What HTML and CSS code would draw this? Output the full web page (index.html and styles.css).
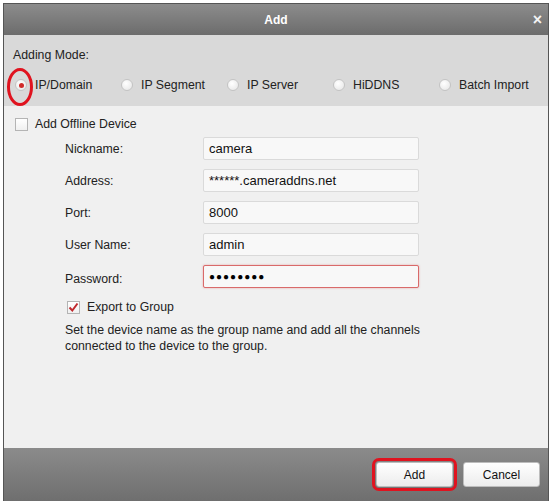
FILE: index.html
```html
<!DOCTYPE html>
<html lang="en">
<head>
    <meta charset="UTF-8">
    <title>Add</title>
    <link rel="stylesheet" href="styles.css">
</head>
<body>
    <div class="dialog">
        <div class="titlebar">
            <span class="title">Add</span>
            <span class="close">&times;</span>
        </div>

        <!-- Modo de agregado -->
        <div class="mode">
            <div class="mode-label">Adding Mode:</div>
            <div class="mode-options">
                <label class="option selected"><span class="radio"></span>IP/Domain<span class="mark-ellipse"></span></label>
                <label class="option"><span class="radio"></span>IP Segment</label>
                <label class="option"><span class="radio"></span>IP Server</label>
                <label class="option"><span class="radio"></span>HiDDNS</label>
                <label class="option"><span class="radio"></span>Batch Import</label>
            </div>
        </div>

        <div class="content">
            <label class="check-row offline"><span class="checkbox"></span>Add Offline Device</label>

            <div class="form">
                <div class="row"><span class="field-label">Nickname:</span><div class="input">camera</div></div>
                <div class="row"><span class="field-label">Address:</span><div class="input">******.cameraddns.net</div></div>
                <div class="row"><span class="field-label">Port:</span><div class="input">8000</div></div>
                <div class="row"><span class="field-label">User Name:</span><div class="input">admin</div></div>
                <div class="row"><span class="field-label low">Password:</span><div class="input error dots">&#9679;&#9679;&#9679;&#9679;&#9679;&#9679;&#9679;&#9679;</div></div>

                <label class="check-row export">
                    <span class="checkbox checked">
                        <svg width="11" height="11" viewBox="0 0 11 11"><path d="M1.5 5.5 L4.3 8.5 L9.5 1.5" fill="none" stroke="#c0282d" stroke-width="2"/></svg>
                    </span>Export to Group
                </label>

                <p class="hint">Set the device name as the group name and add all the channels connected to the device to the group.</p>
            </div>
        </div>

        <div class="footer">
            <button class="btn primary">Add</button>
            <button class="btn">Cancel</button>
        </div>
    </div>
</body>
</html>
```

FILE: styles.css
```css
/* Diseño general */
body {
    margin: 0;
    background: #fff;
    font-family: 'Liberation Sans', Arial, sans-serif;
    font-size: 12.3px;
    color: #222;
    overflow: hidden;
}

.dialog {
    margin: 3px 0 0 3px;
    width: 544px;
    height: 498px;
    border: 1px solid #555;
    border-bottom: none;
    display: flex;
    flex-direction: column;
    background: #f0f0f0;
}

/* Barra de título */
.titlebar {
    height: 31px;
    background: linear-gradient(#8c8c8c, #6c6c6c);
    display: flex;
    align-items: center;
    justify-content: center;
    position: relative;
    color: #fff;
}

.title {
    font-weight: bold;
    font-size: 12px;
}

.close {
    position: absolute;
    right: 6px;
    top: 7px;
    font-size: 16px;
    font-weight: bold;
    color: #f4f4f4;
}

/* Modo de agregado */
.mode {
    height: 71px;
    background: #d9d9d9;
    padding: 12px 0 0 9px;
    box-sizing: border-box;
}

.mode-label {
    line-height: 16px;
}

.mode-options {
    display: grid;
    grid-template-columns: repeat(5, 106px);
    margin: 14px 0 0 2px;
}

.option {
    display: flex;
    align-items: center;
    gap: 8px;
    line-height: 16px;
    position: relative;
}

.radio {
    width: 12px;
    height: 12px;
    border-radius: 50%;
    border: 1px solid #c4c4c4;
    background: radial-gradient(circle at 40% 35%, #fff, #e4e4e4);
    box-sizing: border-box;
    position: relative;
}

.option.selected .radio::after {
    content: '';
    position: absolute;
    left: 2.5px;
    top: 2.5px;
    width: 5px;
    height: 5px;
    border-radius: 50%;
    background: #d02a2a;
}

.mark-ellipse {
    position: absolute;
    left: -8px;
    top: -9px;
    width: 20px;
    height: 32px;
    border: 3px solid #e0131f;
    border-radius: 50%;
}

/* Contenido */
.content {
    flex: 1;
    padding: 8px 0 0 11px;
}

.check-row {
    display: flex;
    align-items: center;
    gap: 7px;
    height: 20px;
}

.checkbox {
    width: 13px;
    height: 13px;
    border: 1px solid #b4b4b4;
    background: linear-gradient(#fff, #f0f0f0);
    box-sizing: border-box;
    display: flex;
    align-items: center;
    justify-content: center;
}

.form {
    padding-left: 50px;
    margin-top: 3px;
}

.row {
    display: flex;
    align-items: center;
    height: 23px;
    margin-bottom: 9px;
}

.field-label {
    width: 138px;
}

.field-label.low {
    padding-top: 5px;
}

.input {
    width: 216px;
    height: 23px;
    box-sizing: border-box;
    border: 1px solid #dadada;
    background: #f8f8f8;
    border-radius: 2px;
    padding: 0 5px;
    line-height: 21px;
    font-size: 13px;
    color: #111;
}

.input.error {
    border-color: #d96a6a;
    box-shadow: 0 0 2px rgba(220, 80, 80, 0.5);
}

.input.dots {
    font-size: 10px;
    letter-spacing: 1px;
    color: #000;
}

.export {
    margin: 0 0 0 2px;
}

.hint {
    margin: 5px 0 0;
    line-height: 16px;
    width: 370px;
}

/* Pie con botones */
.footer {
    height: 54px;
    background: linear-gradient(#8b8b8b, #6e6e6e);
    display: flex;
    justify-content: flex-end;
    align-items: flex-start;
    gap: 10px;
    padding: 14px 8px 0 0;
    box-sizing: border-box;
}

.btn {
    width: 77px;
    height: 25px;
    border: 1px solid #bdbdbd;
    border-radius: 3px;
    background: linear-gradient(#fff, #ececec);
    font-family: 'Liberation Sans', Arial, sans-serif;
    font-size: 12px;
    color: #111;
}

.btn.primary {
    outline: 3px solid #e0131f;
    outline-offset: 1px;
    border-radius: 3px;
}
```
